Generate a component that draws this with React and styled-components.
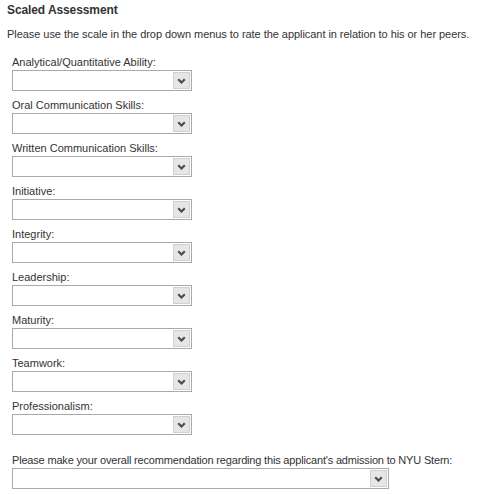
import styled, { createGlobalStyle } from 'styled-components'

const GlobalStyle = createGlobalStyle`
    body {
        margin: 0;
        background: #ffffff;
        font-family: Arial, "Liberation Sans", sans-serif;
        font-size: 11px;
        color: #333333;
    }
`

const Page = styled.div`
    padding: 3px 0 0 7px;
    display: flex;
    flex-direction: column;
    white-space: nowrap;
`

const Title = styled.h3`
    margin: 0;
    font-size: 12px;
    font-weight: bold;
    line-height: 15px;
    letter-spacing: -0.1px;
`

const Intro = styled.p`
    margin: 9px 0 0;
    line-height: 15px;
    letter-spacing: -0.05px;
`

const Fields = styled.div`
    display: flex;
    flex-direction: column;
    gap: 7px;
    margin: 13px 0 0 5px;
`

const Field = styled.div`
    display: flex;
    flex-direction: column;
    margin-top: ${p => (p.$spaced ? '11px' : '0')};
`

const Label = styled.label`
    line-height: 15px;
    letter-spacing: ${p => (p.$tight ? '-0.18px' : '0')};
`

const SelectBox = styled.div`
    box-sizing: border-box;
    width: ${p => p.$width}px;
    height: 21px;
    border: 1px solid #a9a9a9;
    background: #ffffff;
    display: flex;
    justify-content: flex-end;
    align-items: stretch;
    padding: 1px;
`

const ArrowButton = styled.div`
    box-sizing: border-box;
    width: 17px;
    background: #e6e6e6;
    border: 1px solid #d0d0d0;
    display: flex;
    align-items: center;
    justify-content: center;
`

const Chevron = () => (
    <svg width="9" height="6" viewBox="0 0 9 6">
        <path d="M1.2 1.2 L4.5 4.5 L7.8 1.2" fill="none" stroke="#4d4d4d" strokeWidth="2.2" />
    </svg>
)

const traits = [
    'Analytical/Quantitative Ability:',
    'Oral Communication Skills:',
    'Written Communication Skills:',
    'Initiative:',
    'Integrity:',
    'Leadership:',
    'Maturity:',
    'Teamwork:',
    'Professionalism:',
]

function Dropdown({ width }) {
    return (
        <SelectBox $width={width}>
            <ArrowButton>
                <Chevron />
            </ArrowButton>
        </SelectBox>
    )
}

export default function App() {
    return (
        <Page>
            <GlobalStyle />
            <Title>Scaled Assessment</Title>
            <Intro>Please use the scale in the drop down menus to rate the applicant in relation to his or her peers.</Intro>
            <Fields>
                {traits.map(t => (
                    <Field key={t}>
                        <Label>{t}</Label>
                        <Dropdown width={180} />
                    </Field>
                ))}
                <Field $spaced>
                    <Label $tight>Please make your overall recommendation regarding this applicant's admission to NYU Stern:</Label>
                    <Dropdown width={377} />
                </Field>
            </Fields>
        </Page>
    )
}
